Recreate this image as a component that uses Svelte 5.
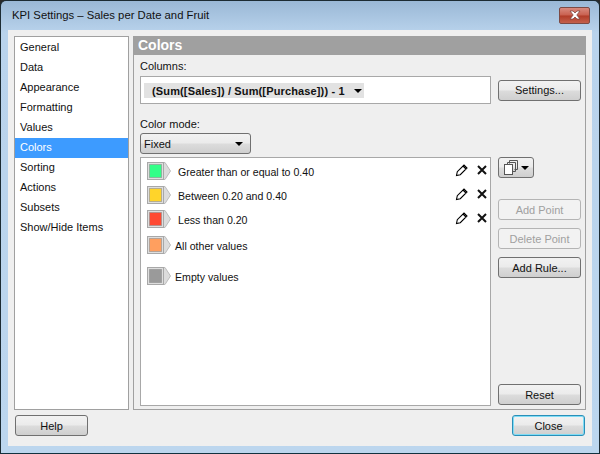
<script lang="ts">
	const pages = ['General', 'Data', 'Appearance', 'Formatting', 'Values', 'Colors', 'Sorting', 'Actions', 'Subsets', 'Show/Hide Items'];
	const rules = [
		{ label: 'Greater than or equal to 0.40', color: '#33ff88', cls: 'rule', edit: true },
		{ label: 'Between 0.20 and 0.40', color: '#ffd42a', cls: 'rule shifted', edit: true },
		{ label: 'Less than 0.20', color: '#ff4a33', cls: 'rule shifted', edit: true },
		{ label: 'All other values', color: '#ff9f5f', cls: 'rule other', edit: false },
		{ label: 'Empty values', color: '#9a9a9a', cls: 'rule empty', edit: false }
	];
</script>

<div class="window">
	<header class="titlebar">
		<span class="title">KPI Settings – Sales per Date and Fruit</span>
		<button class="close-x" aria-label="Close">
			<svg width="16" height="10" viewBox="0 0 16 10">
				<path d="M3 1h3l2 2 2-2h3l-3.200 4L13 9h-3L8 7 6 9H3l3.200-4z" fill="#fff" stroke="#7d4a44" stroke-width="0.800" />
			</svg>
		</button>
	</header>

	<div class="content">
		<div class="main">
			<ul class="nav">
				{#each pages as page}
					<li class:selected={page === 'Colors'}>{page}</li>
				{/each}
			</ul>

			<section class="panel">
				<h2>Colors</h2>
				<div class="panel-body">
					<div class="label columns-label">Columns:</div>
					<div class="columns-row">
						<div class="columns-box">
							<div class="column-chip">
								<span>(Sum([Sales]) / Sum([Purchase])) - 1</span>
								<i class="arrow"></i>
							</div>
						</div>
						<button class="btn">Settings...</button>
					</div>

					<div class="label mode-label">Color mode:</div>
					<div class="select"><span>Fixed</span><i class="arrow"></i></div>

					<div class="rules-row">
						<div class="rules">
							{#each rules as rule}
								<div class={rule.cls}>
									<svg class="swatch" width="24" height="18" viewBox="0 0 24 18">
										<path d="M16 .5h2L23.500 9 18 17.500h-2z" fill="#dcdcdc" stroke="#bcbcbc" />
										<rect x="0.500" y="0.500" width="16" height="17" fill="#dedede" stroke="#a8a8a8" />
										<rect x="2.500" y="2.500" width="12" height="13" fill={rule.color} stroke="#8f8f8f" stroke-opacity="0.600" />
									</svg>
									<span class="rule-label">{rule.label}</span>
									{#if rule.edit}
										<svg class="pencil" width="14" height="14" viewBox="0 0 14 14">
											<path d="M1.500 12.500l.8-3.800L9 2l3 3-6.700 6.700zM8 3l3 3" fill="#fff" stroke="#000" stroke-width="1.100" />
										</svg>
										<svg class="remove" width="10" height="10" viewBox="0 0 10 10">
											<path d="M1 1l8 8M9 1l-8 8" stroke="#111" stroke-width="2" />
										</svg>
									{/if}
								</div>
							{/each}
						</div>

						<div class="side">
							<button class="btn copy" aria-label="Copy">
								<svg width="15" height="15" viewBox="0 0 15 15">
									<path d="M5.500 3.500v-3h8v9h-3M3.500 5.500v-3h8v9h-3" fill="none" stroke="#555" />
									<rect x="0.500" y="4.500" width="8" height="10" fill="#fff" stroke="#555" />
								</svg>
								<i class="arrow"></i>
							</button>
							<button class="btn off first-off">Add Point</button>
							<button class="btn off">Delete Point</button>
							<button class="btn">Add Rule...</button>
							<button class="btn reset">Reset</button>
						</div>
					</div>
				</div>
			</section>
		</div>

		<footer class="footer">
			<button class="btn wide">Help</button>
			<button class="btn wide default">Close</button>
		</footer>
	</div>
</div>

<style>
	:global(body) {
		margin: 0;
		background: #2a2a2a;
	}

	.window {
		box-sizing: border-box;
		width: 600px;
		height: 454px;
		display: flex;
		flex-direction: column;
		border: 1px solid #1c2b33;
		border-bottom-color: #12323f;
		border-radius: 6px 6px 0 0;
		background: linear-gradient(#9ab8d6, #b9d3ec 32px, #bcd6ee);
		font-family: "Liberation Sans", Arial, sans-serif;
		font-size: 11px;
		color: #111;
		overflow: hidden;
	}

	.titlebar {
		height: 29px;
		flex: none;
		display: flex;
		align-items: center;
		justify-content: space-between;
		padding: 0 9px 0 11px;
	}

	.title {
		font-size: 11.3px;
		margin-top: -2px;
	}

	.close-x {
		width: 31px;
		height: 17px;
		margin-top: -1px;
		padding: 0;
		display: flex;
		align-items: center;
		justify-content: center;
		border: 1px solid #7d4a44;
		border-radius: 2px;
		background: linear-gradient(#d98a7e, #c9604f 48%, #b23c28 52%, #c4604c);
	}

	.content {
		flex: 1;
		margin: 0 7px 7px;
		padding: 6px 6px 10px;
		display: flex;
		flex-direction: column;
		background: #efefef;
		min-height: 0;
	}

	.main {
		flex: 1;
		display: flex;
		gap: 4px;
		min-height: 0;
	}

	.nav {
		box-sizing: border-box;
		width: 115px;
		flex: none;
		margin: 0;
		padding: 1px 0 0;
		list-style: none;
		border: 1px solid #a0a0a0;
		background: #fff;
	}

	.nav li {
		height: 20px;
		line-height: 18px;
		padding-left: 5px;
	}

	.nav li.selected {
		background: #3d9bff;
		color: #fff;
	}

	.panel {
		flex: 1;
		min-width: 0;
		display: flex;
		flex-direction: column;
		border: 1px solid #a0a0a0;
		border-top: none;
	}

	h2 {
		height: 19px;
		margin: 0 -1px;
		flex: none;
		padding-left: 5px;
		background: #a0a0a0;
		color: #fff;
		font-size: 14px;
		line-height: 19px;
		font-weight: 700;
	}

	.panel-body {
		flex: 1;
		display: flex;
		flex-direction: column;
		padding: 0 4px 3px 6px;
		min-height: 0;
	}

	.label {
		height: 14px;
		line-height: 14px;
	}

	.columns-label {
		margin-top: 4px;
		margin-bottom: 3px;
	}

	.columns-row {
		display: flex;
		align-items: center;
		gap: 7px;
	}

	.columns-box {
		box-sizing: border-box;
		width: 351px;
		height: 28px;
		flex: none;
		padding: 6px 3px;
		background: #fff;
		border: 1px solid #a8a8a8;
	}

	.column-chip {
		width: 220px;
		height: 15px;
		display: flex;
		align-items: center;
		justify-content: space-between;
		padding: 0 2px 0 8px;
		box-sizing: border-box;
		background: #e2e2e2;
		font-weight: 700;
		font-size: 11px;
		letter-spacing: 0.14px;
		white-space: nowrap;
	}

	.arrow {
		display: inline-block;
		flex: none;
		width: 0;
		height: 0;
		border-left: 4px solid transparent;
		border-right: 4px solid transparent;
		border-top: 4px solid #000;
	}

	.mode-label {
		margin-top: 13px;
		margin-bottom: 2px;
	}

	.select {
		box-sizing: border-box;
		width: 111px;
		height: 21px;
		flex: none;
		display: flex;
		align-items: center;
		justify-content: space-between;
		padding: 0 7px 0 3px;
		border: 1px solid #707070;
		border-radius: 3px;
		background: linear-gradient(#f2f2f2, #ebebeb 48%, #dcdcdc 52%, #cfcfcf);
	}

	.rules-row {
		flex: 1;
		display: flex;
		gap: 7px;
		margin-top: 3px;
		min-height: 0;
	}

	.rules {
		box-sizing: border-box;
		width: 351px;
		flex: none;
		padding-top: 4px;
		background: #fff;
		border: 1px solid #a8a8a8;
	}

	.rule {
		position: relative;
		height: 18px;
		margin-bottom: 6px;
		padding-left: 6px;
		display: flex;
		align-items: center;
	}

	.rule.other {
		margin-top: 8px;
		margin-bottom: 13px;
	}

	.swatch {
		flex: none;
	}

	.rule-label {
		margin: 2px 0 0 7px;
		font-size: 10.6px;
		white-space: nowrap;
	}

	.rule.other .rule-label,
	.rule.empty .rule-label {
		margin-left: 4px;
	}

	.pencil {
		position: absolute;
		left: 314px;
		top: 1px;
	}

	.remove {
		position: absolute;
		left: 336px;
		top: 3px;
	}

	.side {
		flex: 1;
		display: flex;
		flex-direction: column;
		gap: 8px;
	}

	.btn {
		box-sizing: border-box;
		width: 83px;
		height: 21px;
		flex: none;
		padding: 0;
		font: inherit;
		color: #111;
		border: 1px solid #707070;
		border-radius: 3px;
		background: linear-gradient(#f2f2f2, #ebebeb 48%, #dcdcdc 52%, #cfcfcf);
	}

	.btn.copy {
		width: 36px;
		height: 21px;
		display: flex;
		align-items: center;
		justify-content: center;
		gap: 2px;
	}

	.btn.off {
		color: #a0a0a0;
		border-color: #b4b4b4;
		background: #f2f2f2;
	}

	.btn.first-off {
		margin-top: 13px;
	}

	.btn.reset {
		margin-top: auto;
		margin-bottom: 1px;
	}

	.footer {
		flex: none;
		display: flex;
		justify-content: space-between;
		padding: 5px 1px 0;
	}

	.btn.wide {
		width: 73px;
		height: 21px;
	}

	.btn.default {
		border-color: #2a8fb8;
		box-shadow: inset 0 0 0 1px #7fdcf5;
	}
</style>
